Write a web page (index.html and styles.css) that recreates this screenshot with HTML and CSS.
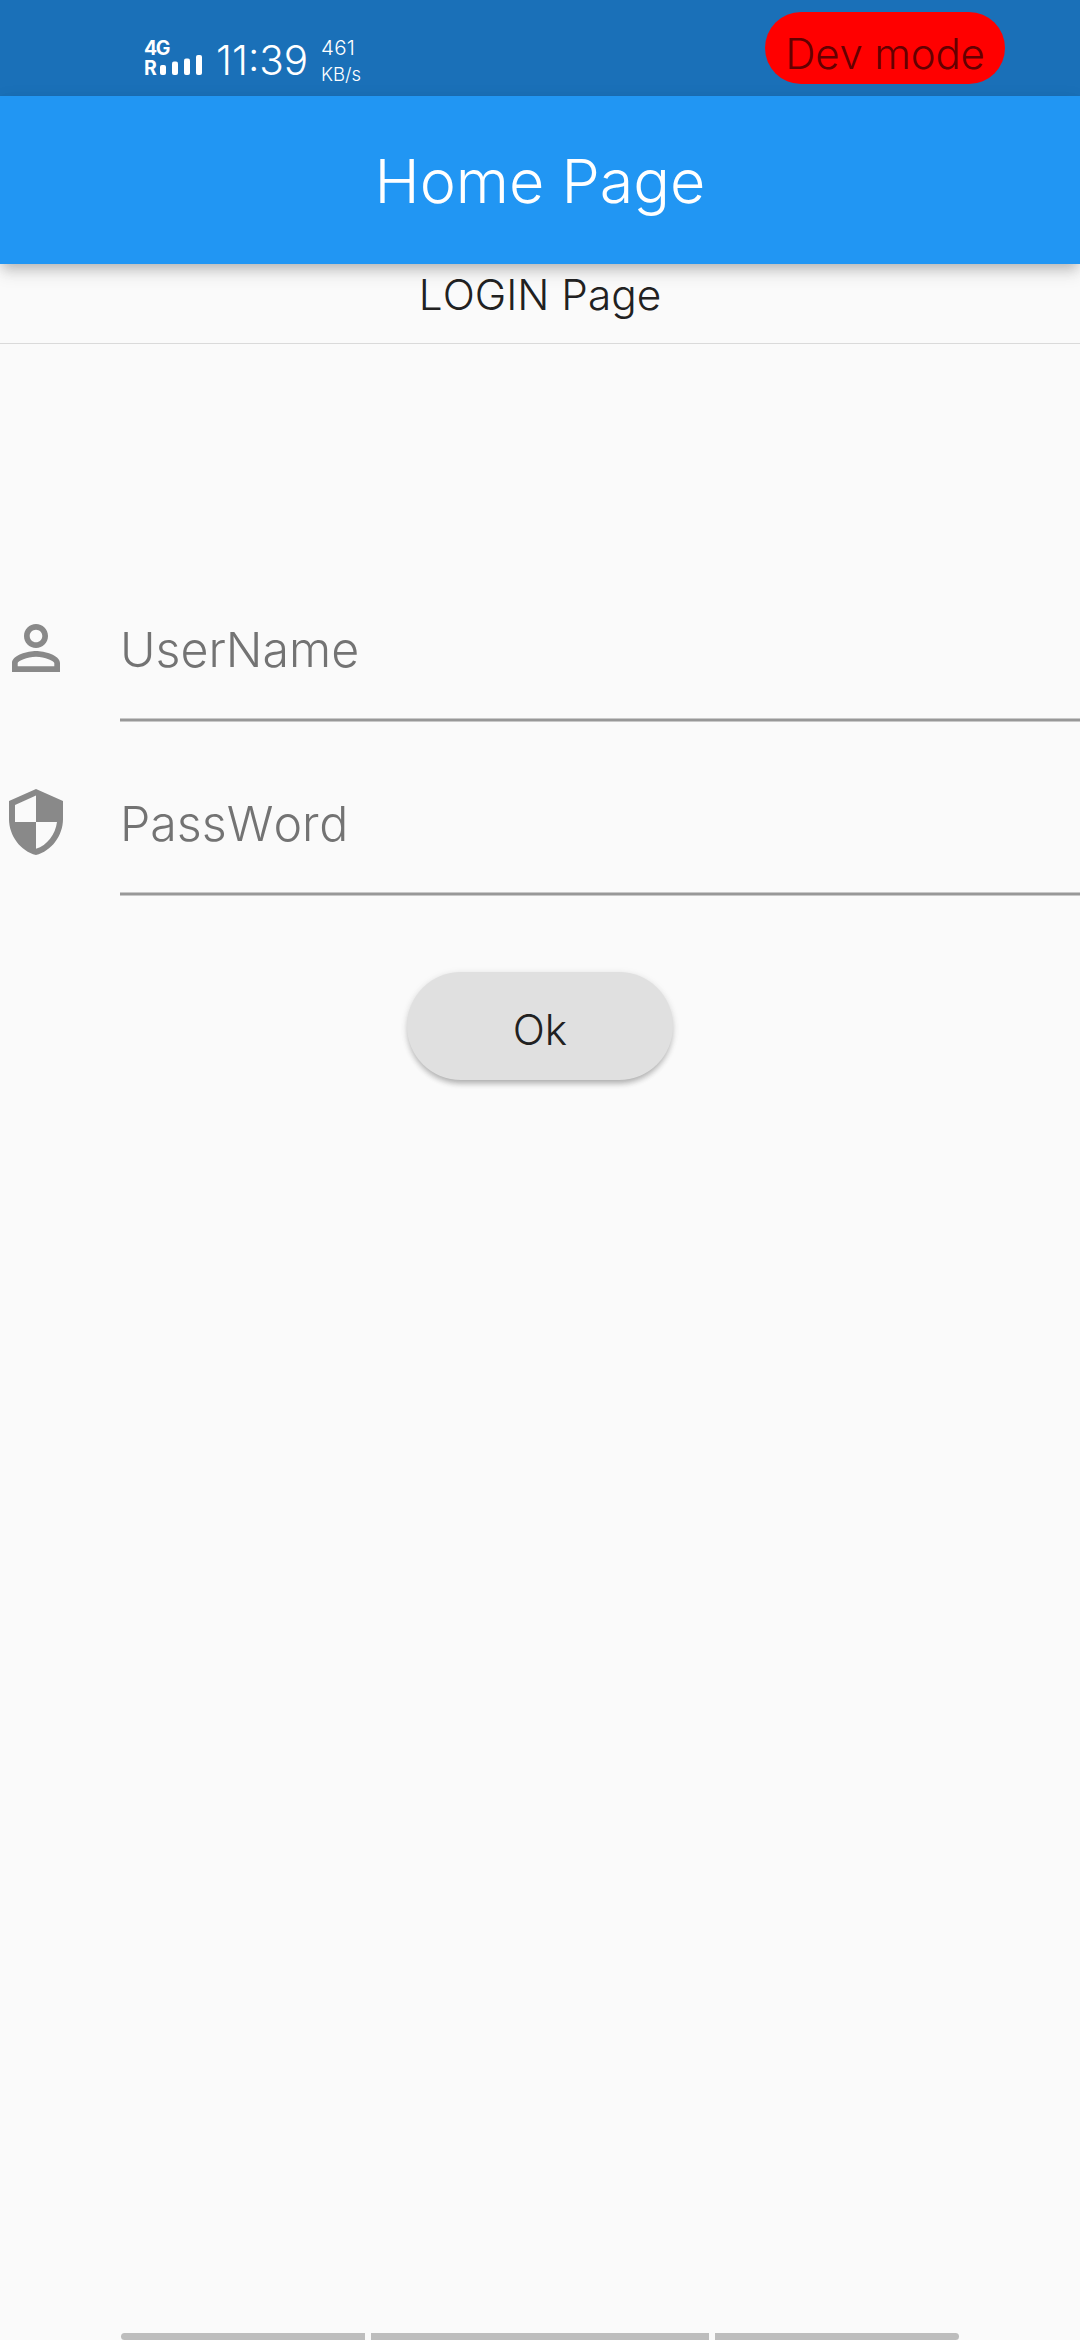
FILE: index.html
```html
<!DOCTYPE html>
<html lang="en">
<head>
<meta charset="utf-8">
<title>Home Page</title>
<link rel="stylesheet" href="styles.css">
</head>
<body>
<div class="screen">
  <header class="status-bar">
    <div class="network">
      <span class="net-type">4G</span>
      <div class="signal">
        <span class="roaming">R</span>
        <svg class="bars" width="42" height="20" viewBox="0 0 42 20" fill="#fff">
          <rect x="0" y="10" width="6" height="10" rx="2"/>
          <rect x="12" y="6.5" width="6" height="13.5" rx="2"/>
          <rect x="24" y="3.5" width="6" height="16.5" rx="2"/>
          <rect x="36" y="0" width="6" height="20" rx="2"/>
        </svg>
      </div>
    </div>
    <span class="clock">11:39</span>
    <div class="speed"><span class="speed-value">461</span><span class="speed-unit">KB/s</span></div>
    <div class="dev-badge"><span class="dev-label">Dev mode</span></div>
  </header>
  <div class="app-bar"><h1 class="title">Home Page</h1></div>
  <div class="subtitle"><span class="subtitle-text">LOGIN Page</span></div>
  <main class="form">
    <div class="row">
      <svg class="icon" viewBox="0 0 24 24"><path d="M12 5.9c1.16 0 2.1.94 2.1 2.1s-.94 2.1-2.1 2.1S9.900 9.160 9.900 8s.94-2.100 2.100-2.100m0 9c2.970 0 6.100 1.460 6.100 2.100v1.100H5.900V17c0-.64 3.130-2.100 6.100-2.100M12 4C9.790 4 8 5.790 8 8s1.790 4 4 4 4-1.790 4-4-1.790-4-4-4zm0 9c-2.670 0-8 1.340-8 4v3h16v-3c0-2.660-5.330-4-8-4z"/></svg>
      <div class="field"><span class="hint">UserName</span></div>
    </div>
    <div class="row">
      <svg class="icon" viewBox="0 0 24 24"><path d="M12 1 3 5v6c0 5.550 3.840 10.740 9 12 5.160-1.260 9-6.450 9-12V5l-9-4zm0 10.990h7c-.53 4.120-3.280 7.790-7 8.940V12H5V6.300l7-3.110v8.800z"/></svg>
      <div class="field"><span class="hint">PassWord</span></div>
    </div>
    <button class="ok" type="button"><span class="ok-label">Ok</span></button>
  </main>
  <footer class="nav-hints"><i class="hint-bar first"></i><i class="hint-bar middle"></i><i class="hint-bar last"></i></footer>
</div>
</body>
</html>
```
FILE: styles.css
```css
* { box-sizing: border-box; }
body { margin: 0; font-family: Inter, Roboto, sans-serif; font-weight: 300; font-kerning: none; }
.screen { width: 1080px; height: 2340px; display: flex; flex-direction: column; background: #fafafa; color: #212121; overflow: hidden; white-space: nowrap; }

.status-bar { height: 96px; flex: none; display: flex; align-items: flex-start; padding: 0 75px 0 144px; background: #1a70b8; color: #fff; }
.network { width: 71px; padding-top: 38px; }
.net-type, .roaming { display: block; font-size: 19.5px; line-height: 20px; font-weight: 700; }
.net-type { letter-spacing: -1.5px; }
.signal { display: flex; align-items: flex-start; }
.roaming { width: 16px; flex: none; }
.bars { margin-top: -3px; }
.clock { width: 106px; padding: 37px 0 0 1px; font-size: 40.5px; line-height: 48px; }
.speed { display: flex; flex-direction: column; padding-top: 35px; line-height: 25px; }
.speed-value { font-size: 20.5px; letter-spacing: .3px; }
.speed-unit { margin-top: 2px; font-size: 18.500px; }
.dev-badge { width: 240px; height: 72px; margin: 12px 0 0 auto; padding-top: 12px; border-radius: 36px; background: #f00; color: #640000; text-align: center; }
.dev-label { display: block; font-size: 42px; line-height: 60px; letter-spacing: -0.2px; }

.app-bar { position: relative; height: 168px; flex: none; display: flex; align-items: center; justify-content: center; padding-top: 2px; background: #2196f3; color: #fff; box-shadow: 0 6px 12px -3px rgba(0,0,0,.2), 0 12px 15px rgba(0,0,0,.07), 0 3px 18px rgba(0,0,0,.06); }
.title { margin: 0; font-size: 61px; line-height: 72px; font-weight: 300; }
.subtitle { height: 80px; flex: none; padding-top: 6px; border-bottom: 1px solid #dadada; text-align: center; }
.subtitle-text { position: relative; font-size: 42.3px; line-height: 50px; }

.form { flex: 1; display: flex; flex-direction: column; padding-top: 230px; }
.row { height: 174px; flex: none; display: flex; align-items: flex-start; }
.icon { width: 72px; height: 72px; flex: none; margin: 38px 48px 0 0; fill: #898989; }
.field { flex: 1; height: 148px; padding-top: 46px; background: linear-gradient(#c8c8c8 25%, #989898 25% 75%, #c8c8c8 75%) bottom / 100% 4px no-repeat; }
.hint { display: block; font-size: 48.3px; line-height: 60px; color: #737373; }
.ok { align-self: center; width: 266px; height: 108px; margin: 50px 0 0; padding: 6px 0 0; border: 0; border-radius: 54px; background: #e0e0e0; color: #212121; font: inherit; font-kerning: none; font-size: 42.3px; box-shadow: 0 6px 6px -3px rgba(0,0,0,.2), 0 3px 6px rgba(0,0,0,.12), 0 1px 9px rgba(0,0,0,.06); }
.nav-hints { display: flex; gap: 6px; height: 7px; padding-left: 121px; }
.hint-bar { height: 7px; background: #bdbdbd; }
.first { width: 244px; border-radius: 4px 0 0 4px; }
.middle { width: 338px; }
.last { width: 244px; border-radius: 0 4px 4px 0; }
```
